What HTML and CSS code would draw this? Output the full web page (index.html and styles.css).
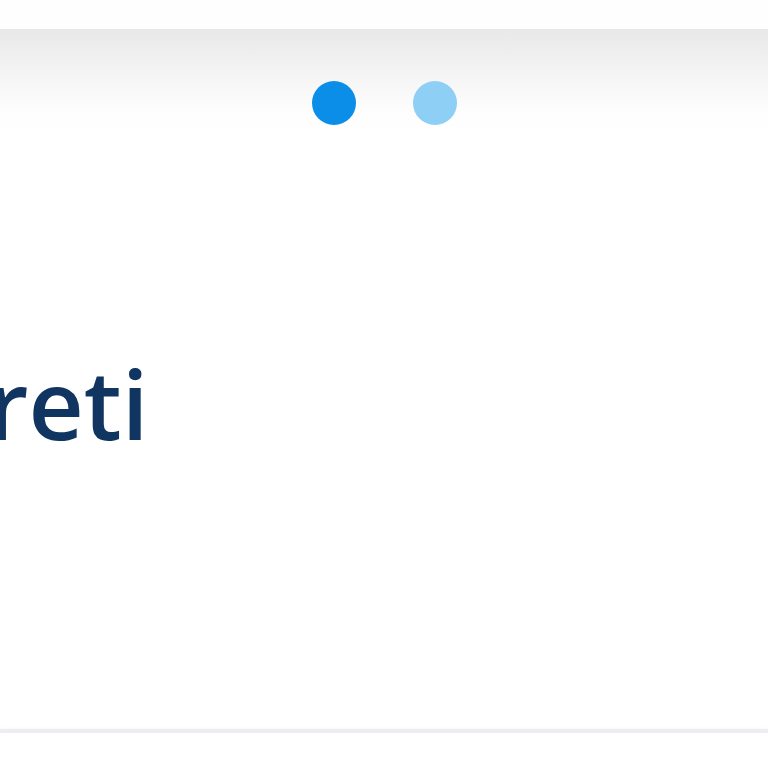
FILE: index.html
```html
<!DOCTYPE html>
<html lang="it">
<head>
<meta charset="utf-8">
<link rel="stylesheet" href="styles.css">
</head>
<body>
<div class="page">
  <div class="top"></div>
  <div class="band">
    <div class="dots">
      <span class="dot active"></span>
      <span class="dot"></span>
    </div>
  </div>
  <div class="content">
    <h1 class="title">reti</h1>
  </div>
  <div class="rule"></div>
  <div class="foot"></div>
</div>
</body>
</html>
```
FILE: styles.css
```css
html, body {
  margin: 0;
  padding: 0;
  background: #ffffff;
}
.page {
  width: 768px;
  height: 768px;
  overflow: hidden;
  display: flex;
  flex-direction: column;
}
.top {
  height: 29px;
  background: #fefefe;
}
.band {
  height: 100px;
  background: linear-gradient(to bottom, #e8e8e8 0%, #f3f3f3 40%, #fdfdfd 80%, #ffffff 100%);
  display: flex;
  justify-content: center;
  padding-top: 52px;
  box-sizing: border-box;
}
.dots {
  display: flex;
  gap: 57px;
  height: 44px;
}
.dot {
  width: 44px;
  height: 44px;
  border-radius: 50%;
  background: #8ecff5;
}
.dot.active {
  background: #0a8ee8;
}
.content {
  flex: 1;
  display: flex;
  align-items: flex-start;
  overflow: hidden;
}
.title {
  margin: 0;
  margin-left: -13px;
  margin-top: 226px;
  font-family: "Open Sans", "Noto Sans", sans-serif;
  font-weight: 600;
  font-size: 96px;
  line-height: 1;
  color: #0f3560;
}
.rule {
  height: 4px;
  background: #ebedf1;
  box-shadow: 0 0 3px #eef0f4;
}
.foot {
  height: 35px;
  background: #ffffff;
}
```
